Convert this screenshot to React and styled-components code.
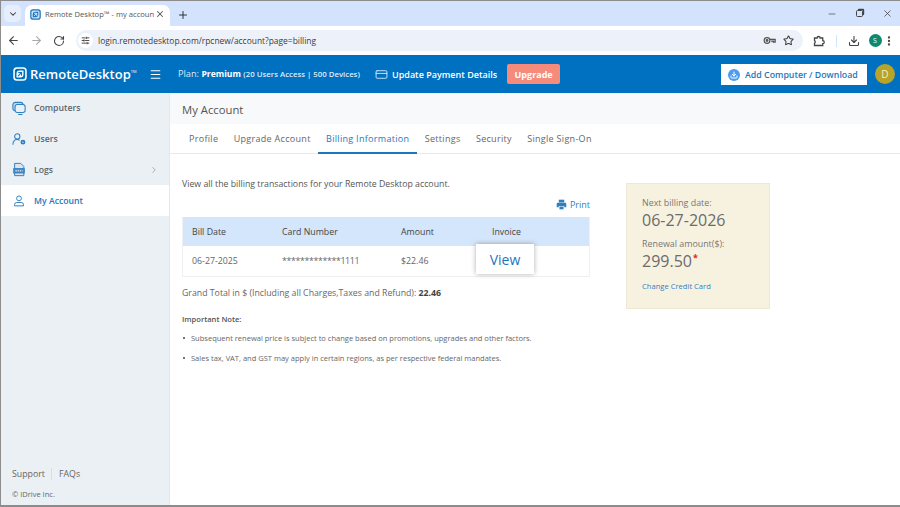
import React from 'react';
import styled, { createGlobalStyle } from 'styled-components';
import { ArrowLeft, ArrowRight, RotateCw, Plus, X, ChevronDown, ChevronRight, Star, Minus, Download, EllipsisVertical, SlidersHorizontal, CreditCard, Menu } from 'lucide-react';

const GlobalStyle = createGlobalStyle`
  html, body { margin: 0; padding: 0; background: #fff; }
  * { box-sizing: border-box; }
  body { font-family: "Open Sans", "Liberation Sans", sans-serif; color: #555; }
`;

const Frame = styled.div`
  width: 900px;
  height: 507px;
  display: flex;
  flex-direction: column;
  overflow: hidden;
  border: 1px solid #8c8c8c;
  border-right: 0;
  border-bottom-width: 2px;
`;

const TabStrip = styled.div`
  height: 25px;
  flex: none;
  background: #d3e3fd;
  display: flex;
  align-items: flex-end;
  padding-left: 3px;
  color: #333;
`;

const TabMenu = styled.div`
  width: 17px;
  height: 17px;
  margin-bottom: 4px;
  border-radius: 5px;
  background: #e6eefc;
  display: flex;
  align-items: center;
  justify-content: center;
`;

const Tab = styled.div`
  width: 145px;
  height: 21px;
  margin-left: 4px;
  background: #fff;
  border-radius: 7px 7px 0 0;
  display: flex;
  align-items: center;
  padding: 0 5px 3px 5px;
  font-size: 7.6px;
  color: #555;
`;

const TabTitle = styled.span`
  flex: 1;
  margin-left: 4px;
  white-space: nowrap;
`;

const NewTab = styled.div`
  margin: 0 0 5px 7px;
  display: flex;
`;

const WindowButtons = styled.div`
  margin-left: auto;
  display: flex;
  align-self: center;
  align-items: center;
  gap: 19px;
  padding-right: 7px;
`;

const RestoreIcon = styled.div`
  width: 7px;
  height: 7px;
  border: 1px solid #444;
  border-radius: 1.5px;
  box-shadow: 1.5px -1.5px 0 -0.3px #444;
`;

const Toolbar = styled.div`
  height: 29px;
  flex: none;
  background: #fff;
  display: flex;
  align-items: center;
  padding-left: 6px;
  color: #444;
`;

const NavButton = styled.div`
  width: 23px;
  display: flex;
  color: ${props => (props.$off ? '#a9a9a9' : '#444')};
`;

const Omnibox = styled.div`
  width: 727px;
  height: 21px;
  background: #edf2fa;
  border-radius: 11px;
  display: flex;
  align-items: center;
  padding: 0 9px 0 2px;
  font-size: 8.43px;
  color: #3c3c3c;
`;

const SiteBadge = styled.div`
  width: 15px;
  height: 15px;
  border-radius: 50%;
  background: #fff;
  display: flex;
  align-items: center;
  justify-content: center;
  margin-right: 5px;
`;

const OmniIcons = styled.div`
  margin-left: auto;
  display: flex;
  align-items: center;
  gap: 7px;
`;

const ToolIcons = styled.div`
  display: flex;
  align-items: center;
  margin-left: 10px;
  gap: 11px;
`;

const ToolDivider = styled.div`
  width: 1px;
  height: 12px;
  background: #d3e3fd;
`;

const ProfileDot = styled.div`
  width: 13px;
  height: 13px;
  border-radius: 50%;
  background: #0b8a72;
  color: #fff;
  font-size: 7px;
  display: flex;
  align-items: center;
  justify-content: center;
  margin-left: -2.5px;
`;

const MoreIcon = styled(EllipsisVertical)`
  margin-left: -9.5px;
`;

const AppHeader = styled.header`
  height: 38px;
  flex: none;
  background: #0070c0;
  color: #fff;
  display: flex;
  align-items: center;
  padding: 0 5px 0 12px;
`;

const Brand = styled.div`
  display: flex;
  align-items: center;
  font-size: 13px;
  font-weight: 600;
  width: 136px;
`;

const BrandName = styled.span`
  margin-left: 3px;
`;

const Tm = styled.sup`
  font-size: 4px;
  font-weight: 400;
  align-self: flex-start;
  margin: 4px 0 0 0;
`;

const Burger = styled.div`
  width: 29px;
  display: flex;
`;

const Plan = styled.div`
  font-size: 9.2px;
  width: 197px;
  white-space: nowrap;
  color: #dcebf7;
  padding-bottom: 1px;

  strong {
    font-size: 8.6px;
    font-weight: 700;
    color: #fff;
  }

  small {
    font-size: 7.8px;
    font-weight: 600;
  }
`;

const PayLink = styled.div`
  display: flex;
  align-items: center;
  gap: 4px;
  font-size: 9px;
  font-weight: 600;
  white-space: nowrap;
`;

const UpgradeButton = styled.div`
  margin-left: 10px;
  width: 53px;
  height: 20px;
  background: #f78b7b;
  border-radius: 2px;
  font-size: 9px;
  font-weight: 700;
  display: flex;
  align-items: center;
  justify-content: center;
`;

const AddButton = styled.div`
  margin-left: auto;
  width: 146px;
  height: 21px;
  padding: 1px 0 0 7px;
  background: #fff;
  color: #1f76bd;
  font-size: 8.8px;
  font-weight: 600;
  display: flex;
  align-items: center;
  gap: 5px;
  white-space: nowrap;
`;

const AddIcon = styled.div`
  width: 12px;
  height: 12px;
  border-radius: 50%;
  background: #4a9cf0;
  color: #fff;
  display: flex;
  align-items: center;
  justify-content: center;
`;

const Avatar = styled.div`
  margin-left: 8px;
  width: 20px;
  height: 20px;
  border-radius: 50%;
  background: #b8a428;
  color: #f5f0c8;
  font-size: 10px;
  display: flex;
  align-items: center;
  justify-content: center;
`;

const Body = styled.div`
  flex: 1;
  display: flex;
  min-height: 0;
`;

const Sidebar = styled.aside`
  width: 169px;
  flex: none;
  background: #ebf0f5;
  display: flex;
  flex-direction: column;
  border-right: 1px solid #e3e8ed;
`;

const NavItem = styled.div`
  height: 30.8px;
  display: flex;
  align-items: center;
  padding: 0 10px 0 11px;
  gap: 8px;
  font-size: 8.7px;
  font-weight: 600;
  background: ${props => (props.$active ? '#fff' : 'transparent')};
  color: ${props => (props.$active ? '#1f76bd' : '#5c6670')};
`;

const NavIcon = styled.div`
  width: 14px;
  display: flex;
  justify-content: center;
  color: #2f7fc1;
`;

const NavArrow = styled.div`
  margin-left: auto;
  display: flex;
  color: #9aa3ab;
`;

const SideFooter = styled.div`
  margin-top: auto;
  padding: 0 0 6px 11px;
  color: #666;
`;

const FooterLinks = styled.div`
  display: flex;
  align-items: center;
  font-size: 8.8px;
  margin-bottom: 9px;
`;

const FooterLink = styled.span`
  padding-right: ${props => (props.$first ? '6px' : '0')};
  margin-right: ${props => (props.$first ? '7px' : '0')};
  border-right: ${props => (props.$first ? '1px solid #d8dee4' : '0')};
`;

const Copyright = styled.div`
  font-size: 7.5px;
`;

const Main = styled.main`
  flex: 1;
  display: flex;
  flex-direction: column;
  min-width: 0;
`;

const TitleBar = styled.div`
  height: 31px;
  flex: none;
  background: #f8f9fa;
  padding: 2px 0 0 12px;
  display: flex;
  align-items: center;
  font-size: 11.3px;
  color: #555;
`;

const Tabs = styled.nav`
  height: 30px;
  flex: none;
  border-bottom: 1px solid #e8eaed;
  padding-left: 11px;
  display: flex;
`;

const TabLink = styled.div`
  padding: 0 8px;
  margin-right: -0.6px;
  height: 30px;
  display: flex;
  align-items: center;
  font-size: 9px;
  letter-spacing: 0.3px;
  white-space: nowrap;
  color: ${props => (props.$active ? '#1f76bd' : '#666')};
  border-bottom: 2px solid ${props => (props.$active ? '#1f76bd' : 'transparent')};
  font-weight: ${props => (props.$active ? 500 : 400)};
`;

const Content = styled.div`
  flex: 1;
  display: flex;
  align-items: flex-start;
  padding: 23px 0 0 12px;
`;

const Billing = styled.section`
  width: 408px;
  flex: none;
`;

const Intro = styled.p`
  margin: 0;
  font-size: 8.77px;
  line-height: 14px;
  color: #555;
`;

const PrintLink = styled.div`
  margin-top: 6px;
  height: 14px;
  display: flex;
  justify-content: flex-end;
  align-items: center;
  gap: 3px;
  font-size: 9px;
  color: #2f7fc1;
`;

const BillTable = styled.div`
  margin-top: 6px;
  border: 1px solid #f0f0f0;
  border-top: 0;
`;

const BillRow = styled.div`
  position: relative;
  display: grid;
  grid-template-columns: 90px 119px 91px 1fr;
  align-items: center;
  padding-left: 9px;
  height: ${props => (props.$head ? '29px' : '30px')};
  background: ${props => (props.$head ? '#d4e6fb' : '#fff')};
  color: ${props => (props.$head ? '#444' : '#666')};
  font-size: 8.8px;
`;

const CardNumber = styled.span`
  letter-spacing: -0.35px;
`;

const ViewPopup = styled.div`
  position: absolute;
  left: 293px;
  top: -2px;
  width: 58px;
  height: 30px;
  background: #fff;
  box-shadow: 0 0 5px rgba(0, 0, 0, 0.32);
  color: #1f76bd;
  font-size: 14px;
  display: flex;
  align-items: center;
  justify-content: center;
`;

const GrandTotal = styled.div`
  margin-top: 9px;
  font-size: 8.76px;
  line-height: 14px;
  color: #666;

  strong {
    color: #444;
  }
`;

const NoteTitle = styled.div`
  margin-top: 13px;
  font-size: 7.6px;
  font-weight: 600;
  line-height: 12px;
  color: #555;
`;

const NoteList = styled.ul`
  margin: 7px 0 0;
  padding: 0 0 0 9px;
  font-size: 7.52px;
  color: #666;
  list-style: none;
`;

const NoteItem = styled.li`
  position: relative;
  line-height: 12px;
  margin-bottom: 8px;

  &::before {
    content: '';
    position: absolute;
    left: -8.5px;
    top: 5px;
    width: 2px;
    height: 2px;
    border-radius: 50%;
    background: #444;
  }
`;

const RenewalCard = styled.aside`
  margin: 6px 0 0 36px;
  width: 144px;
  height: 126px;
  background: #f7f2e0;
  border: 1px solid #efe9d3;
  padding: 13px 15px;
  color: #777;
`;

const CardLabel = styled.div`
  font-size: 8.9px;
  line-height: 12px;
`;

const CardValue = styled.div`
  font-size: 16px;
  line-height: 22px;
  margin-bottom: 7px;
  color: #6b6b6b;

  sup {
    color: #f01818;
    font-size: 9px;
    font-weight: 700;
    line-height: 0;
    margin-left: 1px;
  }
`;

const CardLink = styled.div`
  margin-top: 9px;
  font-size: 7.6px;
  font-weight: 500;
  color: #2f7fc1;
`;

const Logo = ({ size = 14, color = '#fff', fill = 'none' }) => (
  <svg width={size} height={size} viewBox="0 0 16 16" fill="none">
    <rect x="1.2" y="1.2" width="13.6" height="13.6" rx="3.2" fill={fill} stroke={color} strokeWidth="1.8" />
    <path d="M4 12V7.5A3.5 3.5 0 0 1 7.5 4H12v4.5A3.5 3.5 0 0 1 8.5 12z" fill={color} />
    <path d="M6 6.3h3.8V10M9.6 6.5 5.8 10.3" stroke={fill === 'none' ? '#0070c0' : '#fff'} strokeWidth="1.2" />
  </svg>
);

const KeyIcon = () => (
  <svg width="13" height="13" viewBox="0 0 16 16" fill="none" stroke="#555" strokeWidth="1.5">
    <circle cx="5" cy="8" r="3.5" />
    <circle cx="5" cy="8" r="1" fill="#555" />
    <path d="M8.5 6.5h6.5v3.5h-2V8.8h-2V10" />
  </svg>
);

const ExtensionIcon = () => (
  <svg width="12" height="12" viewBox="0 0 16 16" fill="none" stroke="#444" strokeWidth="1.7">
    <path d="M2 4h3.5a2 2 0 0 1 4 0H13v3.5a2 2 0 0 1 0 4V14H2v-3a2 2 0 0 0 0-3.500z" />
  </svg>
);

const PrintIcon = () => (
  <svg width="11" height="11" viewBox="0 0 16 16" fill="#2f7fc1">
    <path d="M4 1h8v4H4z" />
    <path d="M2.500 5.500h11A1.500 1.500 0 0 1 15 7v5h-3v-2H4v2H1V7a1.500 1.500 0 0 1 1.500-1.500z" />
    <path d="M5 11h6v4H5z" />
  </svg>
);

const ComputersIcon = () => (
  <svg width="15" height="15" viewBox="0 0 16 16" fill="none" stroke="#2f7fc1" strokeWidth="1.2">
    <rect x="1" y="1" width="11.5" height="9.5" rx="2.5" fill="#bcd6ec" />
    <rect x="3.5" y="3.5" width="11.5" height="9" rx="2.5" fill="#ebf0f5" />
    <path d="M7 14.8h5" />
  </svg>
);

const UsersIcon = () => (
  <svg width="15" height="15" viewBox="0 0 16 16" fill="none" stroke="#2f7fc1" strokeWidth="1.2">
    <circle cx="6" cy="4.5" r="3" />
    <path d="M1 14c0-4 2-6 5-6 1 0 2 .3 2.8 1" />
    <circle cx="12.5" cy="11" r="1.8" strokeWidth="2" />
  </svg>
);

const LogsIcon = () => (
  <svg width="14" height="15" viewBox="0 0 16 16" fill="none" stroke="#2f7fc1" strokeWidth="1.1">
    <path d="M3 1h7l3.5 3.5V15H3z" fill="#d8e6f3" />
    <rect x="2" y="7" width="12" height="5" fill="#4f8fc6" />
    <path d="M4 9.5h8" stroke="#fff" strokeDasharray="1.5 1" />
  </svg>
);

const AccountIcon = () => (
  <svg width="12" height="12" viewBox="0 0 16 16" fill="none" stroke="#2f7fc1" strokeWidth="1.3">
    <circle cx="8" cy="4.5" r="3.2" />
    <path d="M2 14.5v-1.5a3 3 0 0 1 3-3h6a3 3 0 0 1 3 3v1.5z" />
  </svg>
);

const tabs = ['Profile', 'Upgrade Account', 'Billing Information', 'Settings', 'Security', 'Single Sign-On'];

const App = () => (
  <Frame>
    <GlobalStyle />
    <TabStrip>
      <TabMenu><ChevronDown size={10} strokeWidth={2.5} /></TabMenu>
      <Tab>
        <Logo size={11} color="#1f76bd" fill="#cfe2f3" />
        <TabTitle>Remote Desktop™ - my accoun</TabTitle>
        <X size={10} strokeWidth={2.5} />
      </Tab>
      <NewTab><Plus size={12} strokeWidth={2} /></NewTab>
      <WindowButtons>
        <Minus size={10} strokeWidth={1.5} />
        <RestoreIcon />
        <X size={11} strokeWidth={1.5} />
      </WindowButtons>
    </TabStrip>
    <Toolbar>
      <NavButton><ArrowLeft size={13} /></NavButton>
      <NavButton $off><ArrowRight size={13} /></NavButton>
      <NavButton><RotateCw size={12} strokeWidth={2.2} /></NavButton>
      <Omnibox>
        <SiteBadge><SlidersHorizontal size={9} strokeWidth={2.4} /></SiteBadge>
        login.remotedesktop.com/rpcnew/account?page=billing
        <OmniIcons>
          <KeyIcon />
          <Star size={11} strokeWidth={2.2} />
        </OmniIcons>
      </Omnibox>
      <ToolIcons>
        <ExtensionIcon />
        <ToolDivider />
        <Download size={12} strokeWidth={2.2} />
        <ProfileDot>S</ProfileDot>
        <MoreIcon size={12} strokeWidth={2.6} />
      </ToolIcons>
    </Toolbar>
    <AppHeader>
      <Brand>
        <Logo size={14} />
        <BrandName>RemoteDesktop</BrandName>
        <Tm>TM</Tm>
      </Brand>
      <Burger><Menu size={13} strokeWidth={2} /></Burger>
      <Plan>
        Plan: <strong>Premium</strong> <small>(20 Users Access | 500 Devices)</small>
      </Plan>
      <PayLink>
        <CreditCard size={13} strokeWidth={1.4} />
        Update Payment Details
      </PayLink>
      <UpgradeButton>Upgrade</UpgradeButton>
      <AddButton>
        <AddIcon><Download size={8} strokeWidth={3} /></AddIcon>
        Add Computer / Download
      </AddButton>
      <Avatar>D</Avatar>
    </AppHeader>
    <Body>
      <Sidebar>
        <NavItem><NavIcon><ComputersIcon /></NavIcon>Computers</NavItem>
        <NavItem><NavIcon><UsersIcon /></NavIcon>Users</NavItem>
        <NavItem>
          <NavIcon><LogsIcon /></NavIcon>Logs
          <NavArrow><ChevronRight size={10} /></NavArrow>
        </NavItem>
        <NavItem $active><NavIcon><AccountIcon /></NavIcon>My Account</NavItem>
        <SideFooter>
          <FooterLinks>
            <FooterLink $first>Support</FooterLink>
            <FooterLink>FAQs</FooterLink>
          </FooterLinks>
          <Copyright>© IDrive Inc.</Copyright>
        </SideFooter>
      </Sidebar>
      <Main>
        <TitleBar>My Account</TitleBar>
        <Tabs>
          {tabs.map(name => (
            <TabLink key={name} $active={name === 'Billing Information'}>{name}</TabLink>
          ))}
        </Tabs>
        <Content>
          <Billing>
            <Intro>View all the billing transactions for your Remote Desktop account.</Intro>
            <PrintLink><PrintIcon />Print</PrintLink>
            <BillTable>
              <BillRow $head>
                <span>Bill Date</span>
                <span>Card Number</span>
                <span>Amount</span>
                <span>Invoice</span>
              </BillRow>
              <BillRow>
                <span>06-27-2025</span>
                <CardNumber>*************1111</CardNumber>
                <span>$22.46</span>
                <span />
                <ViewPopup>View</ViewPopup>
              </BillRow>
            </BillTable>
            <GrandTotal>
              Grand Total in $ (Including all Charges,Taxes and Refund): <strong>22.46</strong>
            </GrandTotal>
            <NoteTitle>Important Note:</NoteTitle>
            <NoteList>
              <NoteItem>Subsequent renewal price is subject to change based on promotions, upgrades and other factors.</NoteItem>
              <NoteItem>Sales tax, VAT, and GST may apply in certain regions, as per respective federal mandates.</NoteItem>
            </NoteList>
          </Billing>
          <RenewalCard>
            <CardLabel>Next billing date:</CardLabel>
            <CardValue>06-27-2026</CardValue>
            <CardLabel>Renewal amount($):</CardLabel>
            <CardValue>299.50<sup>*</sup></CardValue>
            <CardLink>Change Credit Card</CardLink>
          </RenewalCard>
        </Content>
      </Main>
    </Body>
  </Frame>
);

export default App;
